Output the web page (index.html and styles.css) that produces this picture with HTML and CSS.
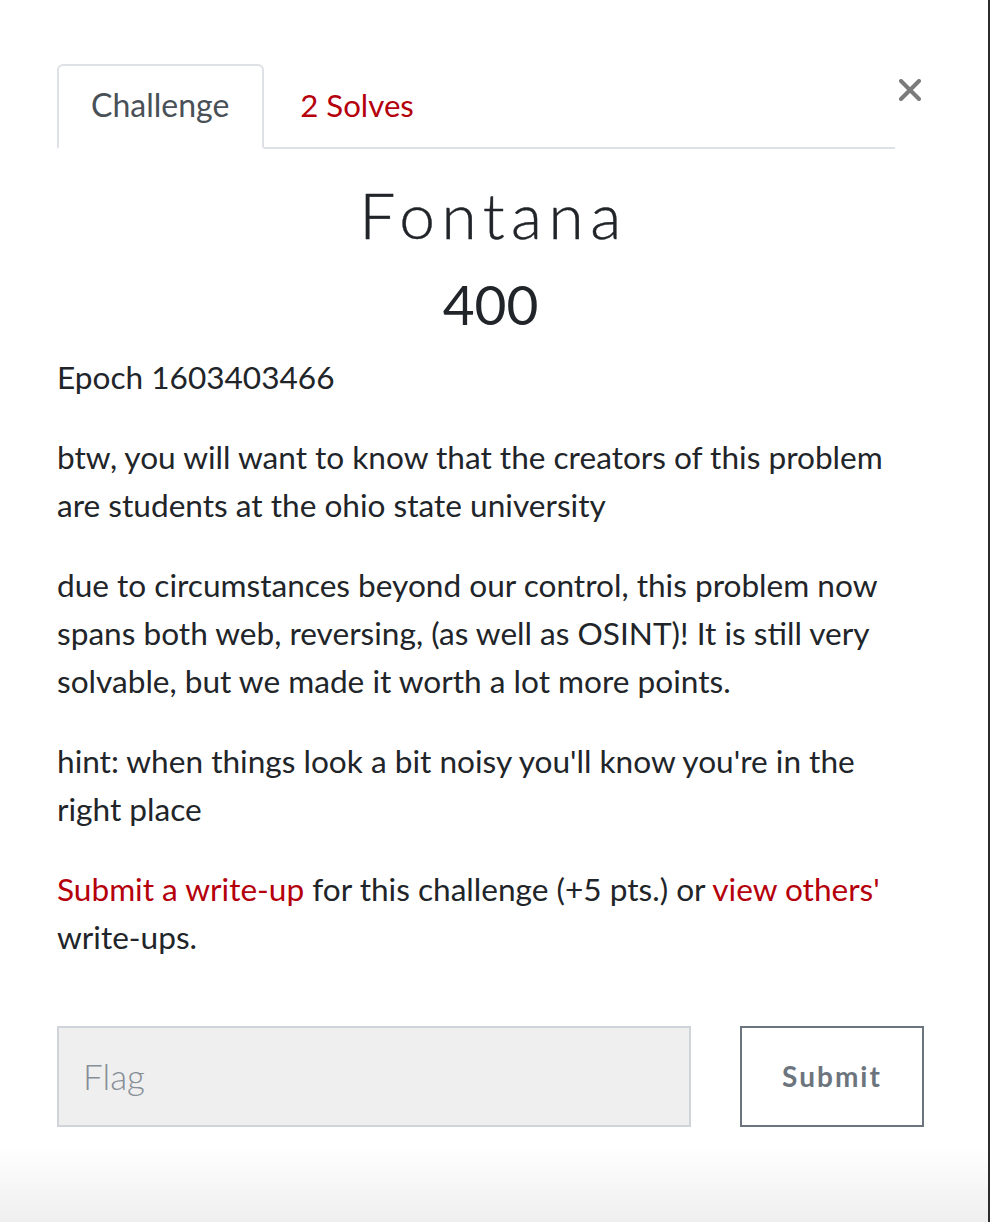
FILE: index.html
```html
<!DOCTYPE html>
<html lang="en">
<head>
<meta charset="utf-8">
<title>Fontana</title>
<link rel="stylesheet" href="styles.css">
</head>
<body>
<div class="modal">
  <div class="modal-inner">
    <div class="header">
      <ul class="nav-tabs">
        <li class="tab active">Challenge</li>
        <li class="tab link">2 Solves</li>
      </ul>
      <button class="close" aria-label="Close">
        <svg width="22" height="22" viewBox="0 0 22 22"><path d="M2 2 L20 20 M20 2 L2 20" stroke="#7b7b7b" stroke-width="4" stroke-linecap="round" fill="none"/></svg>
      </button>
    </div>
    <h2 class="title">Fontana</h2>
    <h3 class="value">400</h3>
    <div class="description">
      <p>Epoch 1603403466</p>
      <p>btw, you will want to know that the creators of this problem are students at the ohio state university</p>
      <p>due to circumstances beyond our control, this problem now spans both web, reversing, (as well as OSINT)! It is still very solvable, but we made it worth a lot more points.</p>
      <p>hint: when things look a bit noisy you'll know you're in the right place</p>
      <p><a href="#">Submit a write-up</a> for this challenge (+5 pts.) or <a href="#">view others'</a> write-ups.</p>
    </div>
    <form class="flag-row">
      <input class="flag-input" type="text" placeholder="Flag">
      <button class="submit" type="button">Submit</button>
    </form>
  </div>
</div>
</body>
</html>
```

FILE: styles.css
```css
html, body {
  margin: 0;
  padding: 0;
}
body {
  background: #2d2d2d;
  font-family: Lato, "Liberation Sans", sans-serif;
  color: #212529;
}
.modal {
  width: 988px;
  min-height: 1222px;
  background: linear-gradient(to bottom, #ffffff 1145px, #efefef 1222px);
}
.modal-inner {
  padding: 64px 64px 0 57px;
}
.header {
  display: flex;
  align-items: flex-start;
}
.nav-tabs {
  flex: 1;
  display: flex;
  list-style: none;
  margin: 0;
  padding: 0;
  border-bottom: 2px solid #dee2e6;
}
.tab {
  font-size: 32px;
  line-height: 48px;
  padding: 15px 33px 18px 32px;
  border: 2px solid transparent;
  border-radius: 6px 6px 0 0;
  margin-bottom: -2px;
}
.tab.active {
  color: #495057;
  border-color: #dee2e6 #dee2e6 #ffffff;
  background: #fff;
}
.tab.link {
  color: #b5000c;
  font-size: 31.2px;
  padding-left: 34px;
}
.close {
  width: 29px;
  margin: 15px 0 0 0;
  padding: 0 0 0 4px;
  border: 0;
  background: transparent;
  display: flex;
}
.title {
  margin: 28px 0 0;
  text-align: center;
  font-family: Lato, "Liberation Sans", sans-serif;
  font-weight: 300;
  font-size: 64px;
  line-height: 1.2;
  letter-spacing: 6.5px;
  padding-left: 6px;
  color: #212529;
  -webkit-text-stroke: 0.4px #212529;
}
.value {
  margin: 17px 0 0;
  text-align: center;
  font-weight: 400;
  font-size: 55px;
  line-height: 1.2;
  color: #212529;
}
.description {
  margin-top: 16px;
  font-size: 31.6px;
  line-height: 48px;
}
.description p {
  margin: 0 0 32px;
}
.description a {
  color: #b5000c;
  text-decoration: none;
}
.flag-row {
  display: flex;
  gap: 49px;
  margin-top: 65px;
}
.flag-input {
  width: 634px;
  height: 101px;
  box-sizing: border-box;
  border: 2px solid #ced4da;
  background: #efefef;
  padding: 0 24px;
  font-family: Lato, "Liberation Sans", sans-serif;
  font-size: 35px;
  font-weight: 300;
  color: #495057;
  outline: none;
}
.flag-input::placeholder {
  color: #868e96;
}
.submit {
  width: 184px;
  height: 101px;
  box-sizing: border-box;
  border: 2px solid #6c757d;
  background: #fff;
  color: #6c757d;
  font-family: Lato, "Liberation Sans", sans-serif;
  font-size: 28px;
  font-weight: 700;
  letter-spacing: 2px;
}
```
